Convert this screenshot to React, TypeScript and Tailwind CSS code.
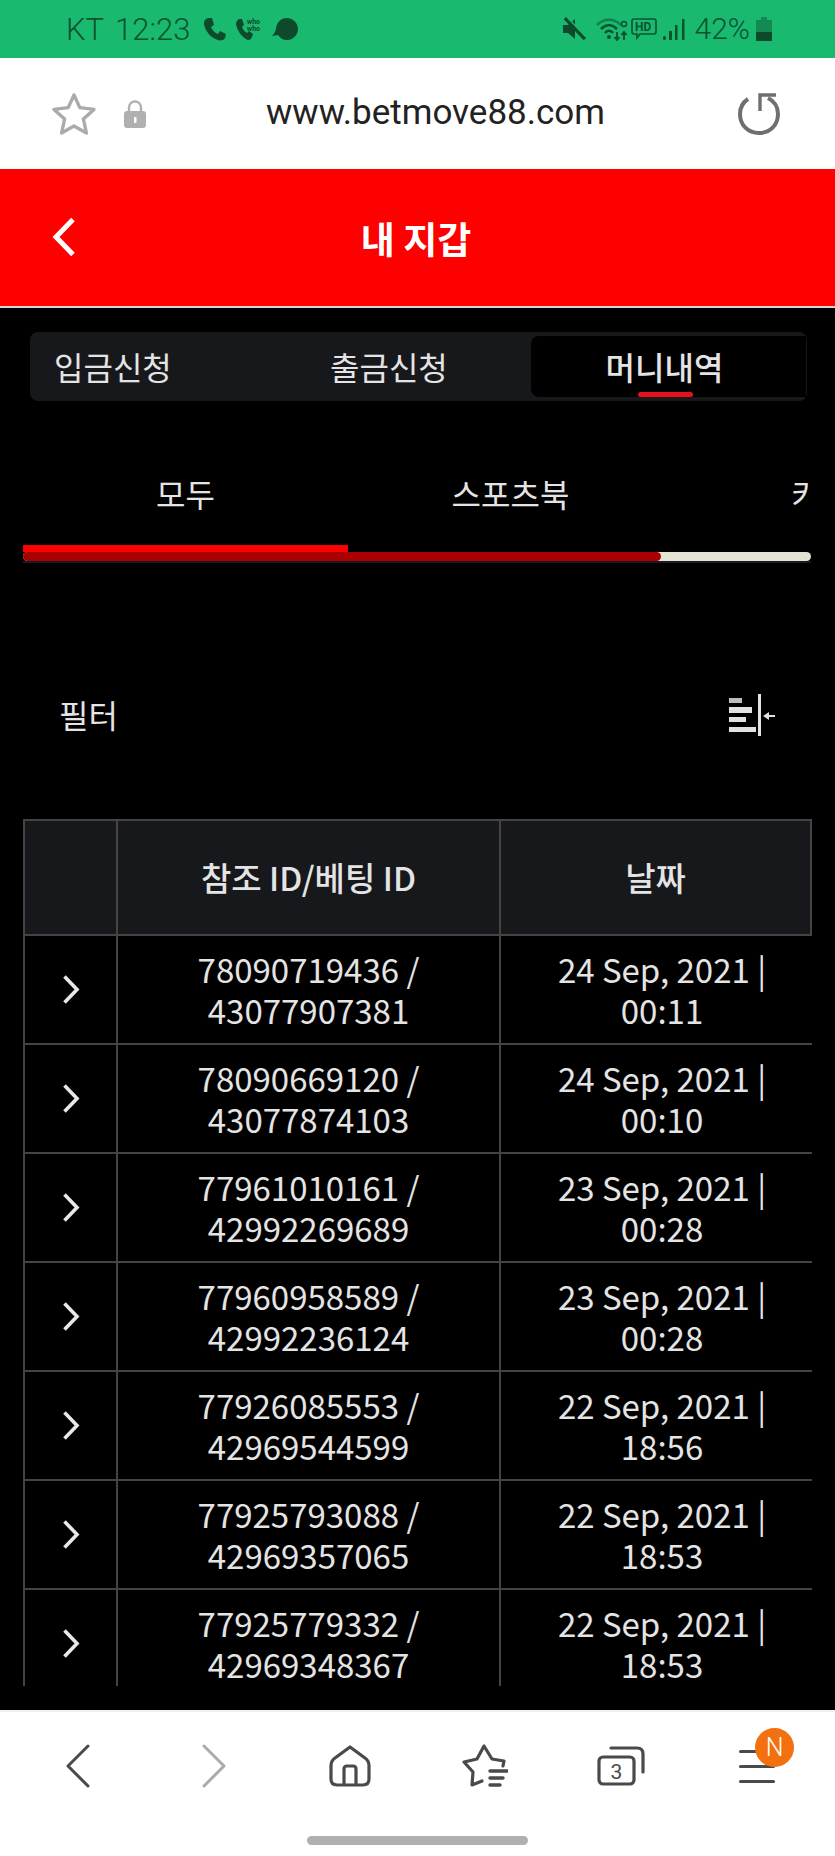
const rows = [
  { id: '78090719436 / 43077907381', date: '24 Sep, 2021 | 00:11' },
  { id: '78090669120 / 43077874103', date: '24 Sep, 2021 | 00:10' },
  { id: '77961010161 / 42992269689', date: '23 Sep, 2021 | 00:28' },
  { id: '77960958589 / 42992236124', date: '23 Sep, 2021 | 00:28' },
  { id: '77926085553 / 42969544599', date: '22 Sep, 2021 | 18:56' },
  { id: '77925793088 / 42969357065', date: '22 Sep, 2021 | 18:53' },
  { id: '77925779332 / 42969348367', date: '22 Sep, 2021 | 18:53' },
];

function StatusBar() {
  return (
    <div className="h-[58px] bg-[#19b970] text-[#0d5230] flex items-center justify-between pl-[66px] pr-[63px] font-['Roboto',sans-serif]">
      <div className="flex items-center">
        <span className="text-[31px] leading-none font-light [word-spacing:4px] mr-[13px]">KT 12:23</span>
        <svg width="23" height="24" viewBox="0 0 23 24" fill="#0d4a2b">
          <path d="M5 1 L9 1 L11 8 L8 10 C9 13 12 16 15 17 L17 14 L23 17 L22 21 C21 23 18 24 15 23 C8 21 2 14 1 7 C0.7 4 2 2 5 1 Z" />
        </svg>
        <svg width="30" height="24" viewBox="0 0 30 24" fill="#0d4a2b" className="ml-[9px]">
          <path d="M4 2 L7 2 L9 8 L7 10 C8 13 10 15 12 16 L14 14 L18 17 L17 20 C16 23 13 24 11 22 C6 19 2 13 1 7 C1 5 2 3 4 2 Z" />
          <text x="12" y="7" fontSize="7" fontWeight="700">who</text>
          <text x="12" y="14" fontSize="7" fontWeight="700">who</text>
        </svg>
        <svg width="26" height="22" viewBox="0 0 26 22" fill="#0d4a2b" className="ml-[7px]">
          <path d="M15 0 C21 0 26 5 26 11 C26 17 21 22 15 22 C11 22 8 20 6 17 L0 18 C3 15 4 12 4.5 8 C6 3 10 0 15 0 Z" />
        </svg>
      </div>
      <div className="flex items-center">
        <svg width="23" height="24" viewBox="0 0 23 24" fill="#0d4a2b">
          <path d="M0 8 L5 8 L12 2 L12 22 L5 16 L0 16 Z" />
          <path d="M2 1 L22 22" stroke="#0d4a2b" strokeWidth="3.5" />
          <path d="M4 0 L23 20" stroke="#19b970" strokeWidth="1.5" />
        </svg>
        <svg width="32" height="24" viewBox="0 0 32 24" fill="none" className="ml-[10px]">
          <path d="M1 8 C8 1 18 1 25 8" stroke="#0d5230" strokeOpacity="0.55" strokeWidth="2.5" />
          <path d="M5 12 C10 7 16 7 21 12" stroke="#0d5230" strokeWidth="2.5" />
          <path d="M9 16 C11 13 15 13 17 16" stroke="#0d5230" strokeWidth="2.5" />
          <circle cx="13" cy="20" r="2" fill="#0d5230" />
          <path d="M21 15 L21 23 M18.5 20 L21 23 L23.5 20 M28 23 L28 15 M25.5 18 L28 15 L30.5 18" stroke="#0d5230" strokeWidth="1.8" />
          <circle cx="28" cy="7" r="2.5" stroke="#0d5230" strokeWidth="1.4" />
        </svg>
        <svg width="26" height="22" viewBox="0 0 26 22" fill="none" className="ml-[3px]">
          <path d="M3 1 L23 1 C24.5 1 25 2 25 3 L25 14 C25 15.5 24 16 23 16 L9 16 L6 20 L6 16 L3 16 C2 16 1 15 1 14 L1 3 C1 2 2 1 3 1 Z" stroke="#0d5230" strokeWidth="1.6" />
          <text x="4" y="13" fontSize="12" fontWeight="700" fill="#0d5230" fontFamily="Roboto, sans-serif">HD</text>
        </svg>
        <svg width="22" height="22" viewBox="0 0 22 22" fill="#0d5230" className="ml-[6px]">
          <rect x="0" y="18" width="3" height="4" rx="1.5" />
          <rect x="6" y="13" width="3" height="9" />
          <rect x="12" y="7" width="2.5" height="15" />
          <rect x="19" y="1" width="2.5" height="21" />
        </svg>
        <span className="text-[30px] leading-none font-light ml-[10px] mr-[6px]">42%</span>
        <svg width="16" height="24" viewBox="0 0 16 24">
          <path d="M5 0 L11 0 L11 3 L15 3 C15.6 3 16 3.4 16 4 L16 23 C16 23.6 15.6 24 15 24 L1 24 C0.4 24 0 23.6 0 23 L0 4 C0 3.4 0.4 3 1 3 L5 3 Z" fill="#0d5230" fillOpacity="0.45" />
          <path d="M0 15 L16 15 L16 23 C16 23.6 15.6 24 15 24 L1 24 C0.4 24 0 23.6 0 23 Z" fill="#0d4a2b" />
        </svg>
      </div>
    </div>
  );
}

function UrlBar() {
  return (
    <div className="h-[111px] bg-white flex items-center pl-[52px] pr-[53px] font-['Roboto',sans-serif]">
      <svg width="44" height="42" viewBox="0 0 44 42" fill="none" stroke="#ababab" strokeWidth="3.4" strokeLinejoin="round">
        <path d="M22 2 L27.8 14.6 L42 16.4 L31.4 26 L34.4 40 L22 33 L9.6 40 L12.6 26 L2 16.4 L16.2 14.6 Z" />
      </svg>
      <svg width="22" height="28" viewBox="0 0 22 28" className="ml-[28px] mt-[1px]">
        <path d="M5 13 L5 8 C5 4 7.5 1.5 11 1.5 C14.5 1.5 17 4 17 8 L17 13" fill="none" stroke="#b0b0b0" strokeWidth="2.4" />
        <rect x="0" y="11" width="22" height="17" rx="3" fill="#b0b0b0" />
        <rect x="10" y="17" width="2.5" height="6" rx="1" fill="#fff" />
      </svg>
      <div className="flex-1 text-center text-[35px] leading-none text-[#222] pr-[11px] pb-[2px]">www.betmove88.com</div>
      <svg width="42" height="42" viewBox="0 0 42 42" fill="none" stroke="#6f6f6f" strokeWidth="4" className="ml-[2px] mr-[2px]">
        <path d="M10 6 C4 10 2 15 2 21 C2 32 10 40 21 40 C32 40 40 32 40 21 C40 14 36 8 30 5" />
        <path d="M22 18 L22 2 L38 2" strokeWidth="3.4" />
      </svg>
    </div>
  );
}

function BottomNav() {
  return (
    <div className="h-[146px] bg-white border-t-2 border-[#f0f0f0] px-[10px]">
      <div className="grid grid-cols-6 h-[108px] items-center justify-items-center">
        <svg width="24" height="44" viewBox="0 0 24 44" fill="none" stroke="#4a4a4a" strokeWidth="3" strokeLinecap="round" strokeLinejoin="round">
          <path d="M22 2 L2 22 L22 42" />
        </svg>
        <svg width="24" height="44" viewBox="0 0 24 44" fill="none" stroke="#ababab" strokeWidth="3" strokeLinecap="round" strokeLinejoin="round">
          <path d="M2 2 L22 22 L2 42" />
        </svg>
        <svg width="42" height="42" viewBox="0 0 42 42" fill="none" stroke="#4a4a4a" strokeWidth="3.2" strokeLinejoin="round">
          <path d="M21 2 L36 13 C39 15 40 17 40 21 L40 34 C40 38 38 40 34 40 L8 40 C4 40 2 38 2 34 L2 21 C2 17 3 15 6 13 Z" />
          <path d="M15 40 L15 24 C15 22 16 21 18 21 L24 21 C26 21 27 22 27 24 L27 40" />
        </svg>
        <svg width="46" height="44" viewBox="0 0 46 44" fill="none" stroke="#4a4a4a" strokeWidth="3.2" strokeLinejoin="round" strokeLinecap="round">
          <path d="M41 22 L42 17 L30 15 L22 2 L15 15 L2 18 L11 28 L10 41 L20 37" />
          <path d="M28 27 L45 27 M28 34 L41 34 M28 41 L38 41" strokeWidth="3.4" />
        </svg>
        <svg width="48" height="40" viewBox="0 0 48 40" fill="none" stroke="#4a4a4a" strokeWidth="3.2" strokeLinejoin="round" strokeLinecap="round">
          <rect x="2" y="11" width="35" height="27" rx="4" />
          <path d="M14 2 L40 2 C44 2 46 4 46 8 L46 26" />
          <text x="19.5" y="33" textAnchor="middle" fontSize="21" fill="#4a4a4a" stroke="none" fontFamily="Roboto, sans-serif">3</text>
        </svg>
        <div className="relative w-[36px] h-[33px] flex flex-col justify-between">
          <div className="h-[3px] w-full rounded-full bg-[#4a4a4a]" />
          <div className="h-[3px] w-full rounded-full bg-[#4a4a4a]" />
          <div className="h-[3px] w-full rounded-full bg-[#4a4a4a]" />
          <div className="absolute left-[16px] top-[-22px] w-[39px] h-[39px] rounded-full bg-[#f3700f] text-white text-[25px] font-light flex items-center justify-center font-['Roboto',sans-serif]">
            N
          </div>
        </div>
      </div>
      <div className="w-[221px] h-[9px] rounded-full bg-[#b0b0b0] mx-auto mt-[16px]" />
    </div>
  );
}

export default function App() {
  return (
    <div className="w-[835px] h-[1856px] bg-black flex flex-col overflow-hidden text-[#e4e4e4] text-[32px] leading-[41px] font-['Noto_Sans_CJK_KR','Noto_Sans',sans-serif]">
      <StatusBar />
      <UrlBar />

      {/* Header */}
      <div className="h-[139px] bg-[#ff0000] border-b-2 border-[#d8d4d0] flex items-center">
        <svg width="24" height="38" viewBox="0 0 24 38" fill="none" stroke="#fff" strokeWidth="5" className="ml-[52px] mt-[-2px]">
          <path d="M21 1.5 L4 19 L21 36.5" />
        </svg>
        <h1 className="flex-1 text-center text-white text-[37px] font-bold pr-[76px] mt-[2px] ml-[-3px]">내 지갑</h1>
      </div>

      {/* Wallet tabs */}
      <div className="mx-[30px] mt-[24px] h-[69px] w-[777px] rounded-[8px] bg-[#17181c] flex pt-[4px] pb-[4px] pl-[24px] pr-[1px]">
        <div className="w-[276px] h-full flex items-center">입금신청</div>
        <div className="w-[201px] h-full flex items-center">출금신청</div>
        <div className="flex-1 h-full rounded-l-[8px] bg-black flex items-center justify-center relative font-medium pr-[8px]">
          머니내역
          <div className="absolute bottom-0 left-[107px] w-[55px] h-[5px] rounded-full bg-[#e8101c]" />
        </div>
      </div>

      {/* Sub tabs */}
      <div className="mx-[23px] mt-[72px] w-[788px]">
        <div className="overflow-hidden flex">
          <div className="w-[325px] shrink-0 text-center">모두</div>
          <div className="w-[325px] shrink-0 text-center">스포츠북</div>
          <div className="w-[325px] shrink-0 text-center">카지노</div>
        </div>
        <div className="mt-[31px] h-[18px]">
          <div className="h-[7px] w-[325px] bg-[#ff0000]" />
          <div className="h-[9px] rounded-full bg-[#e4e3d3]">
            <div className="h-full w-[638px] rounded-full bg-[#a80000]" />
          </div>
          <div className="h-[2px] bg-[#1a1b20]" />
        </div>
      </div>

      {/* Filter */}
      <div className="flex items-center justify-between pl-[59px] pr-[60px] mt-[130px] h-[44px]">
        <span className="mb-[2px]">필터</span>
        <svg width="47" height="42" viewBox="0 0 47 42" fill="#e2e2e2">
          <rect x="1" y="4" width="13" height="5" fill="#bdbdbd" />
          <rect x="1" y="13" width="23" height="6" />
          <rect x="1" y="23" width="17" height="5" />
          <rect x="1" y="33" width="27" height="5" />
          <rect x="30" y="0" width="3" height="42" />
          <path d="M47 21 L41 21 L41 18 L35 22 L41 26 L41 23 L47 23 Z" />
        </svg>
      </div>

      {/* Table */}
      <div className="mx-[23px] mt-[82px] w-[789px] h-[867px] overflow-hidden text-[33px]">
        <div className="grid grid-cols-[93px_383px_313px] h-[117px] bg-[#17181c] border-t-2 border-b-2 border-[#444] font-medium">
          <div className="border-l-2 border-[#444]" />
          <div className="border-l-2 border-[#444] flex items-center justify-center">참조 ID/베팅 ID</div>
          <div className="border-l-2 border-r-2 border-[#444] flex items-center justify-center">날짜</div>
        </div>
        {rows.map((row) => (
          <div key={row.id} className="grid grid-cols-[93px_383px_329px] h-[109px] border-b-2 border-[#444] text-center w-[805px]">
            <div className="border-l-2 border-[#444] flex items-center justify-center">
              <svg width="18" height="29" viewBox="0 0 18 29" fill="none" stroke="#e8e8e8" strokeWidth="3.6">
                <path d="M2.5 1.5 L15 14.5 L2.5 27.5" />
              </svg>
            </div>
            <div className="border-l-2 border-[#444] flex items-center justify-center px-[60px]">{row.id}</div>
            <div className="border-l-2 border-[#444] flex items-center justify-center pl-[20px] pr-[25px]">{row.date}</div>
          </div>
        ))}
      </div>

      <div className="flex-1" />
      <BottomNav />
    </div>
  );
}
